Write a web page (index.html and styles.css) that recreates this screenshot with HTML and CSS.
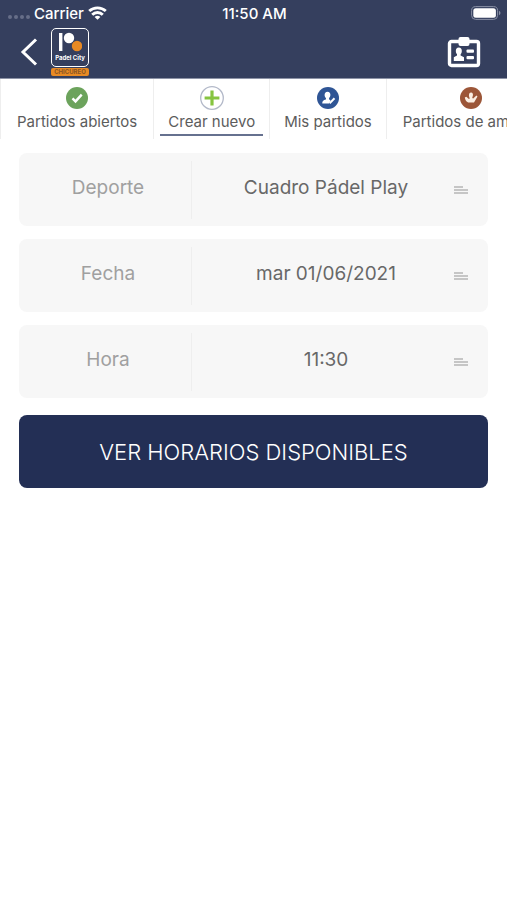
FILE: index.html
```html
<!DOCTYPE html>
<html lang="es">
<head>
    <meta charset="UTF-8">
    <meta name="viewport" content="width=device-width, initial-scale=1.0">
    <title>Crear nuevo partido</title>
    <link rel="stylesheet" href="styles.css">
</head>
<body>
    <header class="header">
        <!-- Status bar -->
        <div class="status-bar">
            <div class="status-left">
                <span class="signal"><i></i><i></i><i></i><i></i></span>
                <span>Carrier</span>
                <svg class="wifi" width="19" height="14" viewBox="0 0 19 14" fill="none" stroke="#fff" stroke-width="2.900">
                    <path d="M1.200 5C5.800 .8 13.200 .8 17.800 5"/>
                    <path d="M4.200 8.700c3-2.900 7.600-2.900 10.600 0"/>
                    <path d="M6.600 10.900c1.700-1.500 4.100-1.500 5.800 0L9.500 13.800z" fill="#fff" stroke="none"/>
                </svg>
            </div>
            <span class="time">11:50 AM</span>
            <div class="status-right">
                <svg width="30" height="14" viewBox="0 0 30 14">
                    <rect x=".6" y=".6" width="26" height="12.800" rx="4" fill="none" stroke="#8990a5"/>
                    <rect x="2.300" y="2.300" width="22.600" height="9.400" rx="2.500" fill="#fff"/>
                    <path d="M28 4.800c2 .8 2 3.600 0 4.400z" fill="#8990a5"/>
                </svg>
            </div>
        </div>

        <!-- Navigation -->
        <div class="nav-bar">
            <button type="button" class="icon-button" aria-label="Volver">
                <svg width="18" height="28" viewBox="0 0 18 28" fill="none" stroke="#fff" stroke-width="3">
                    <path d="M16 1.500L3 14l13 12.500"/>
                </svg>
            </button>
            <div class="logo">
                <div class="logo-box">
                    <svg width="24" height="22" viewBox="0 0 24 22">
                        <path d="M1 2h3.400v18H1z" fill="#fff"/>
                        <circle cx="11" cy="7" r="5.200" fill="#fff"/>
                        <circle cx="19" cy="15" r="5.200" fill="#e88a24"/>
                    </svg>
                    <span>Padel City</span>
                </div>
                <div class="logo-tag">CHICUREO</div>
            </div>
            <button type="button" class="icon-button card-button" aria-label="Mi perfil">
                <svg width="34" height="32" viewBox="0 0 34 32">
                    <rect x="2.500" y="5.500" width="29" height="24" rx="2" fill="none" stroke="#fff" stroke-width="3.400"/>
                    <rect x="11.500" y="1" width="11" height="9" rx="2" fill="#fff"/>
                    <ellipse cx="11.800" cy="15" rx="3" ry="3.600" fill="#fff"/>
                    <path d="M10 17h3.600v2.500l3.400 1.700V25H6.800v-3.800l3.200-1.700z" fill="#fff"/>
                    <rect x="19.500" y="13.500" width="7.500" height="3.200" rx="1" fill="#fff"/>
                    <rect x="19.500" y="20" width="7.500" height="3.200" rx="1" fill="#fff"/>
                </svg>
            </button>
        </div>
    </header>

    <nav class="tabs">
        <a href="#" class="tab wide">
            <svg width="24" height="24" viewBox="0 0 24 24">
                <circle cx="12" cy="12" r="11" fill="#6ca35c"/>
                <path d="M7.500 12.400l3 3 6.200-6.800" fill="none" stroke="#fff" stroke-width="2.400"/>
            </svg>
            <span>Partidos abiertos</span>
        </a>
        <a href="#" class="tab active">
            <svg width="24" height="24" viewBox="0 0 24 24">
                <circle cx="12" cy="12" r="11.300" fill="#fff" stroke="#b3b9c9" stroke-width="1.300"/>
                <path d="M12 4.600v14.800M4.600 12h14.800" stroke="#86c440" stroke-width="3.200"/>
            </svg>
            <span>Crear nuevo</span>
        </a>
        <a href="#" class="tab">
            <svg width="24" height="24" viewBox="0 0 24 24">
                <circle cx="12" cy="12" r="11" fill="#2f5595"/>
                <path d="M11.500 5.800c2 0 3 1.500 2.900 3.200-.1 1.500-.8 2.500-1.400 3.200l.2 1.400 1.400.9-1.700 2.900H6.300c-.2-2.200.9-3 3.600-3.800l.1-1.400c-.8-.8-1.400-1.800-1.400-3.200 0-1.800 1-3.200 2.900-3.200z" fill="#fff"/>
                <path d="M13.600 17.400l4.900-5.200" stroke="#fff" stroke-width="2"/>
            </svg>
            <span>Mis partidos</span>
        </a>
        <a href="#" class="tab wide">
            <svg width="24" height="24" viewBox="0 0 24 24">
                <circle cx="12" cy="12" r="11" fill="#9c5638"/>
                <path d="M12 6.500c1.700 0 2.200 1.600 1.900 3l-.7 2.500 1 .6 3.200-3.200 1.100 1-3.500 6.200H9.200c-1.800-1-3-2.600-3.400-5.200l1.500-.7 2.600 2.400 1-.8c-1.500-2-1.200-5.800 1.100-5.800z" fill="#fbeee2"/>
            </svg>
            <span>Partidos de amigos</span>
        </a>
    </nav>

    <!-- Booking form -->
    <form class="booking">
        <div class="field">
            <label for="deporte">Deporte</label>
            <select id="deporte">
                <option>Cuadro Pádel Play</option>
            </select>
            <span class="lines"><i></i><i></i><i></i></span>
        </div>
        <div class="field">
            <label for="fecha">Fecha</label>
            <select id="fecha">
                <option>mar 01/06/2021</option>
            </select>
            <span class="lines"><i></i><i></i><i></i></span>
        </div>
        <div class="field">
            <label for="hora">Hora</label>
            <select id="hora">
                <option>11:30</option>
            </select>
            <span class="lines"><i></i><i></i><i></i></span>
        </div>
        <button type="button" class="submit">VER HORARIOS DISPONIBLES</button>
    </form>
</body>
</html>
```
FILE: styles.css
```css
:root {
    --header-color: #353f5e;
    --button-color: #232f55;
    --field-color: #f7f7f7;
    --line-color: #eeeeee;
    --label-color: #a0a0a0;
    --value-color: #686868;
    --tab-color: #5c5c5c;
    --orange: #e88a24;
}

* {
    box-sizing: border-box;
}

body {
    margin: 0;
    font-family: Inter, "Liberation Sans", sans-serif;
    background-color: #fff;
}

svg {
    display: block;
}

/* Header */
.header {
    background-color: var(--header-color);
    border-bottom: 1px solid #8d93a6;
    color: #fff;
}

.status-bar {
    display: grid;
    grid-template-columns: 1fr auto 1fr;
    align-items: center;
    height: 26px;
    padding: 0 6px 0 8px;
    font-size: 15px;
    font-weight: 500;
}

.status-left {
    display: flex;
    align-items: center;
    gap: 4px;
}

.signal {
    display: flex;
    gap: 2px;
    padding-top: 8px;
}

.signal i {
    width: 4px;
    height: 4px;
    border-radius: 50%;
    background-color: #666e88;
}

.status-right {
    display: flex;
    justify-content: flex-end;
}

.nav-bar {
    display: flex;
    align-items: center;
    height: 52px;
    padding: 0 26px 0 20px;
}

.icon-button {
    padding: 0;
    border: none;
    background: none;
    cursor: pointer;
}

.card-button {
    margin-left: auto;
}

.logo {
    width: 38px;
    margin-left: 13px;
    text-align: center;
    font-weight: 700;
}

.logo-box {
    display: flex;
    flex-direction: column;
    align-items: center;
    height: 39px;
    padding-top: 2px;
    border: 1px solid #fff;
    border-radius: 5px;
    font-size: 6px;
    line-height: 10px;
}

.logo-tag {
    height: 8px;
    margin-top: 1px;
    border-radius: 2px;
    background-color: var(--orange);
    color: #8a5524;
    font-size: 6px;
    line-height: 8px;
}

/* Tabs */
.tabs {
    display: flex;
    height: 60px;
    overflow: hidden;
}

.tab {
    display: flex;
    flex: none;
    flex-direction: column;
    align-items: center;
    padding: 7px 6px 0;
    border-left: 1px solid var(--line-color);
    color: var(--tab-color);
    font-size: 15px;
    line-height: 24px;
    text-decoration: none;
    white-space: nowrap;
}

.tab.wide {
    padding: 7px 8px 0;
}

.tab span {
    padding: 0 8px;
    border-bottom: 2px solid transparent;
}

.tab.active span {
    border-bottom-color: #66718f;
}

/* Booking form */
.booking {
    display: flex;
    flex-direction: column;
    gap: 13px;
    padding: 14px 19px;
}

.field {
    display: grid;
    grid-template-columns: 172px 1fr 28px;
    align-items: center;
    height: 73px;
    padding-right: 6px;
    border-radius: 8px;
    background-color: var(--field-color);
    font-size: 19px;
}

.field label {
    padding: 0 0 4px 6px;
    color: var(--label-color);
    text-align: center;
}

.field select {
    appearance: none;
    height: 58px;
    padding: 0 0 4px 6px;
    border: none;
    border-left: 1px solid var(--line-color);
    background: none;
    color: var(--value-color);
    font: inherit;
    text-align: center;
    text-align-last: center;
    cursor: pointer;
}

.lines {
    display: grid;
    gap: 1px;
    width: 14px;
}

.lines i {
    height: 2px;
    background-color: #c6c6c6;
}

.lines i:first-child {
    width: 9px;
}

.submit {
    height: 73px;
    margin-top: 4px;
    border: none;
    border-radius: 8px;
    background-color: var(--button-color);
    color: #fff;
    font-family: inherit;
    font-size: 22px;
    font-weight: 300;
    cursor: pointer;
}
```
